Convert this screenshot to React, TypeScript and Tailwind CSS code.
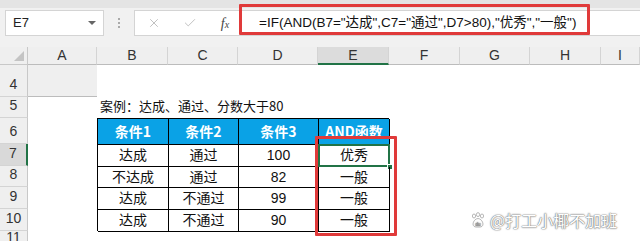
import { X, Check } from 'lucide-react';

const font = { fontFamily: '"Liberation Sans", "Noto Sans CJK SC", sans-serif' };

const columns = ['A', 'B', 'C', 'D', 'E', 'F', 'G', 'H', 'I'];
const rows = ['4', '5', '6', '7', '8', '9', '10', '11'];

const headers = ['条件1', '条件2', '条件3', 'AND函数'];
const data = [
  ['达成', '通过', '100', '优秀'],
  ['不达成', '通过', '82', '一般'],
  ['达成', '不通过', '99', '一般'],
  ['达成', '不通过', '90', '一般'],
];

function Paw() {
  return (
    <svg width="16" height="16" viewBox="0 0 16 16">
      <ellipse cx="4" cy="4" rx="1.6" ry="2" fill="#fff" stroke="#999" strokeWidth="0.7" />
      <ellipse cx="8" cy="2.6" rx="1.6" ry="2" fill="#fff" stroke="#999" strokeWidth="0.7" />
      <ellipse cx="12" cy="4" rx="1.6" ry="2" fill="#fff" stroke="#999" strokeWidth="0.7" />
      <path d="M8 6.5c-2.5 0-5 3-5 5.5 0 2 1.5 3 3 3h4c1.5 0 3-1 3-3 0-2.5-2.5-5.5-5-5.5z" fill="#fff" stroke="#999" strokeWidth="0.7" />
      <text x="8" y="13.5" fontSize="4.5" textAnchor="middle" fill="#999" fontFamily="Liberation Sans">du</text>
    </svg>
  );
}

export default function App() {
  return (
    <div className="relative w-[640px] h-[241px] overflow-hidden bg-white text-[#222]" style={font}>
      {/* Formula bar */}
      <div className="h-[47px] bg-[#f1f1f1] border-t-[8px] border-[#e4e4e4] flex items-start pt-[2px]">
        <div className="ml-[5px] w-[99px] h-[26px] bg-white border border-[#d4d4d4] flex items-center justify-between px-[7px]">
          <span className="text-[13px]">E7</span>
          <span className="w-0 h-0 border-l-[4px] border-r-[4px] border-t-[4px] border-l-transparent border-r-transparent border-t-[#666]" />
        </div>
        <div className="w-[30px] h-[26px] flex flex-col items-center justify-center gap-[2px]">
          <span className="w-[2px] h-[2px] bg-[#aaa]" />
          <span className="w-[2px] h-[2px] bg-[#aaa]" />
          <span className="w-[2px] h-[2px] bg-[#aaa]" />
        </div>
        <div className="flex-1 h-[26px] bg-white border-l border-y border-[#d4d4d4] flex items-center">
          <div className="w-[38px] flex justify-center"><X className="w-[14px] h-[14px] text-[#b8b8b8]" strokeWidth={1.5} /></div>
          <div className="w-[34px] flex justify-center"><Check className="w-[14px] h-[14px] text-[#b8b8b8]" strokeWidth={1.5} /></div>
          <div className="w-[36px] flex justify-center">
            <span className="text-[14px] italic text-[#444]" style={{ fontFamily: '"Liberation Serif", serif' }}>f<span className="text-[10px]">x</span></span>
          </div>
          <span className="ml-[16px] text-[13.5px] text-[#111] whitespace-nowrap">=IF(AND(B7="达成",C7="通过",D7&gt;80),"优秀","一般")</span>
        </div>
      </div>

      {/* Sheet */}
      <div className="grid grid-cols-[28px_69px_71px_70px_80px_71px_71px_70px_71px_1fr] grid-rows-[18px_32px_21px_26px_22px_21px_22px_22px_1fr] h-[194px]">
        {/* corner */}
        <div className="bg-[#efefef] border-r border-b border-[#c8c8c8] relative">
          <span className="absolute right-[3px] bottom-[3px] w-0 h-0 border-b-[10px] border-l-[10px] border-b-[#c4c4c4] border-l-transparent" />
        </div>
        {columns.map((c) => (
          <div
            key={c}
            className={`flex items-center justify-center text-[14px] text-[#333] border-r border-[#d4d4d4] ${
              c === 'E' ? 'bg-[#dcdcdc] border-b-2 border-b-[#217346]' : 'bg-[#efefef] border-b border-b-[#bcbcbc]'
            }`}
          >
            {c}
          </div>
        ))}
        <div className="bg-[#efefef] border-b border-[#bcbcbc]" />

        {/* row headers */}
        {rows.map((r, i) => (
          <div
            key={r}
            className={`flex items-end justify-center pb-[1px] text-[14px] text-[#333] border-b border-[#d4d4d4] ${
              r === '7' ? 'bg-[#d9d9d9] border-r-2 border-r-[#217346]' : 'bg-[#efefef] border-r border-r-[#c8c8c8]'
            } ${i === rows.length - 1 ? 'leading-[12px]' : ''}`}
            style={{ gridColumn: 1, gridRow: i + 2 }}
          >
            {r}
          </div>
        ))}

        {/* caption in row 5 */}
        <div className="col-start-3 col-span-4 row-start-3 flex items-end pb-[3px] pl-[3px] text-[13px] text-[#111] whitespace-nowrap" style={{ fontFamily: '"Noto Sans CJK SC", sans-serif' }}>
          案例：达成、通过、分数大于80
        </div>

        {/* table */}
        <div className="col-start-3 col-span-4 row-start-4 row-span-5 grid grid-cols-[71px_70px_80px_71px] grid-rows-[26px_22px_21px_22px_22px] border-l border-t border-black">
          {headers.map((h) => (
            <div key={h} className="bg-[#0aa2e6] text-white font-bold text-[14px] flex items-center justify-center border-r border-b border-black" style={{ fontFamily: '"Noto Sans CJK SC", sans-serif' }}>
              {h}
            </div>
          ))}
          {data.map((row, ri) =>
            row.map((v, ci) => (
              <div key={`${ri}-${ci}`} className="relative flex items-center justify-center text-[14px] text-[#111] border-r border-b border-black">
                {v}
                {ri === 0 && ci === 3 && (
                  <>
                    <span className="absolute -left-[1px] -top-[1px] w-[72px] h-[23px] border-2 border-[#217346]" />
                    <span className="absolute -right-[4px] -bottom-[4px] w-[6px] h-[6px] bg-[#217346] border border-white" />
                  </>
                )}
              </div>
            ))
          )}
        </div>
      </div>

      {/* red annotation boxes */}
      <div className="absolute left-[239px] top-[4px] w-[351px] h-[31px] border-[3px] border-[#e03a3a] rounded-[1px]" />
      <div className="absolute left-[315px] top-[136px] w-[82px] h-[100px] border-[3px] border-[#e03a3a] rounded-[1px]" />

      {/* watermark */}
      <div className="absolute left-[470px] top-[208px] flex items-center gap-[4px] text-[16px] text-white [text-shadow:0_0_1px_#777,0_0_1px_#777,0_0_2px_#999]" style={{ fontFamily: '"Noto Sans CJK SC", sans-serif' }}>
        <Paw />
        <span>@打工小椰不加班</span>
      </div>
    </div>
  );
}
